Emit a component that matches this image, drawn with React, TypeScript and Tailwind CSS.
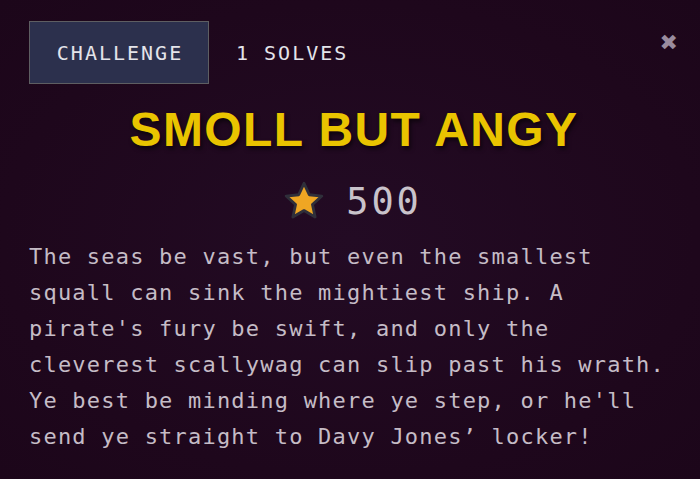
import React from "react";

export default function App() {
  return (
    <div className="w-[700px] h-[479px] overflow-hidden bg-[radial-gradient(ellipse_at_center,#230b24_0%,#1e071c_70%,#1c061a_100%)] relative">
      <button className="absolute top-[32px] right-[22px] text-[#9a8c9e] text-[22px] leading-none font-['DejaVu_Sans',sans-serif]">
        ✖
      </button>
      <div className="flex flex-col px-[29px] pt-[21px]">
        <div className="flex items-center gap-[27px]">
          <div className="w-[180px] h-[63px] flex items-center justify-center bg-[#2c304d] border border-[#5e5e62] text-[#e4e4ea] text-[20px] tracking-[0.1em] font-['DejaVu_Sans_Mono',monospace] pl-[2px]">
            CHALLENGE
          </div>
          <div className="text-[#e4e4ea] text-[20px] tracking-[0.1em] font-['DejaVu_Sans_Mono',monospace]">
            1 SOLVES
          </div>
        </div>
        <h1 className="mt-[18px] pl-[8px] text-center text-[#e9c400] text-[48px] leading-[56px] font-bold tracking-[1.4px] font-['Liberation_Sans',Arial,sans-serif] [text-shadow:2px_3px_4px_rgba(0,0,0,0.6)]">
          SMOLL BUT ANGY
        </h1>
        <div className="mt-[22px] flex items-center justify-center gap-[20px] pl-[4px]">
          <svg width="44" height="44" viewBox="0 0 40 40">
            <path
              d="M20 3 L24.8 13.4 L36.2 14.6 L27.7 22.3 L30.1 33.6 L20 27.8 L9.9 33.6 L12.3 22.3 L3.8 14.6 L15.2 13.4 Z"
              fill="#efa623"
              stroke="#2f2f3a"
              strokeWidth="2.6"
              strokeLinejoin="round"
            />
          </svg>
          <span className="text-[#c9c3cb] text-[37px] leading-[44px] tracking-[0.08em] font-['DejaVu_Sans_Mono',monospace]">
            500
          </span>
        </div>
        <p className="mt-[15px] text-[#c5bcc6] text-[22px] leading-[36px] tracking-[0.055em] font-['DejaVu_Sans_Mono',monospace]">
          The seas be vast, but even the smallest squall can sink the mightiest ship. A pirate's fury be swift, and only the cleverest scallywag can slip past his wrath. Ye best be minding where ye step, or he'll send ye straight to Davy Jones’ locker!
        </p>
      </div>
    </div>
  );
}
